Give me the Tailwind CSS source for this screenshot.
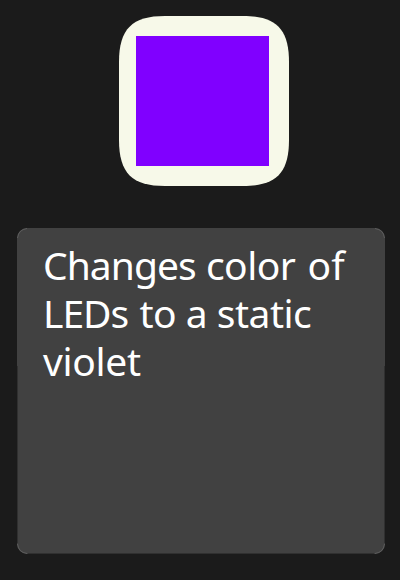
<!DOCTYPE html>
<html lang="en"><head><meta charset="utf-8"><title>Static violet</title>
<script src="https://cdn.jsdelivr.net/npm/@tailwindcss/browser@4"></script></head>
<body class="h-[580px] w-[400px] overflow-hidden bg-[#1b1b1b] font-['Noto_Sans',sans-serif]">
<main class="flex flex-col pt-4 pl-[17px]">
<svg class="ml-[102px] block size-[170px]" viewBox="0 0 170 170" role="img" aria-label="Violet">
<path fill="#f7f9e9" d="M46 0H124C157 0 170 13 170 46V124C170 157 157 170 124 170H46C13 170 0 157 0 124V46C0 13 13 0 46 0Z"/>
<path fill="#8000ff" d="M17 20H150V150H17Z"/>
</svg>
<section class="relative mt-[42px] h-[326px] w-[368px] rounded-[10px] bg-[#414141] pt-[13px] pl-[26px]">
<svg class="absolute inset-0 size-full" viewBox="0 0 368 326" fill="none" aria-hidden="true">
<path stroke="#303030" d="M.5 138V315M367.5 138V315M11 325.5H357"/>
<path stroke="#707070" stroke-opacity=".65" d="M.5 10Q1.5 1.5 10 .5M358 .5Q366.5 1.5 367.5 10M.5 316Q1.5 324.500 10 325.500M358 325.500Q366.500 324.500 367.500 316"/>
</svg>
<p class="relative text-[39px] leading-[48px] whitespace-nowrap text-white"><span class="tracking-[-0.95px]">Changes</span> <span class="mr-[2px] tracking-[-0.5px]">color</span> of<br><span class="tracking-[-1px]">LEDs</span> <span class="ml-[1px] tracking-[-0.5px]">to a static</span><br><span class="tracking-[-0.3px]">violet</span></p>
</section>
</main>
</body></html>
